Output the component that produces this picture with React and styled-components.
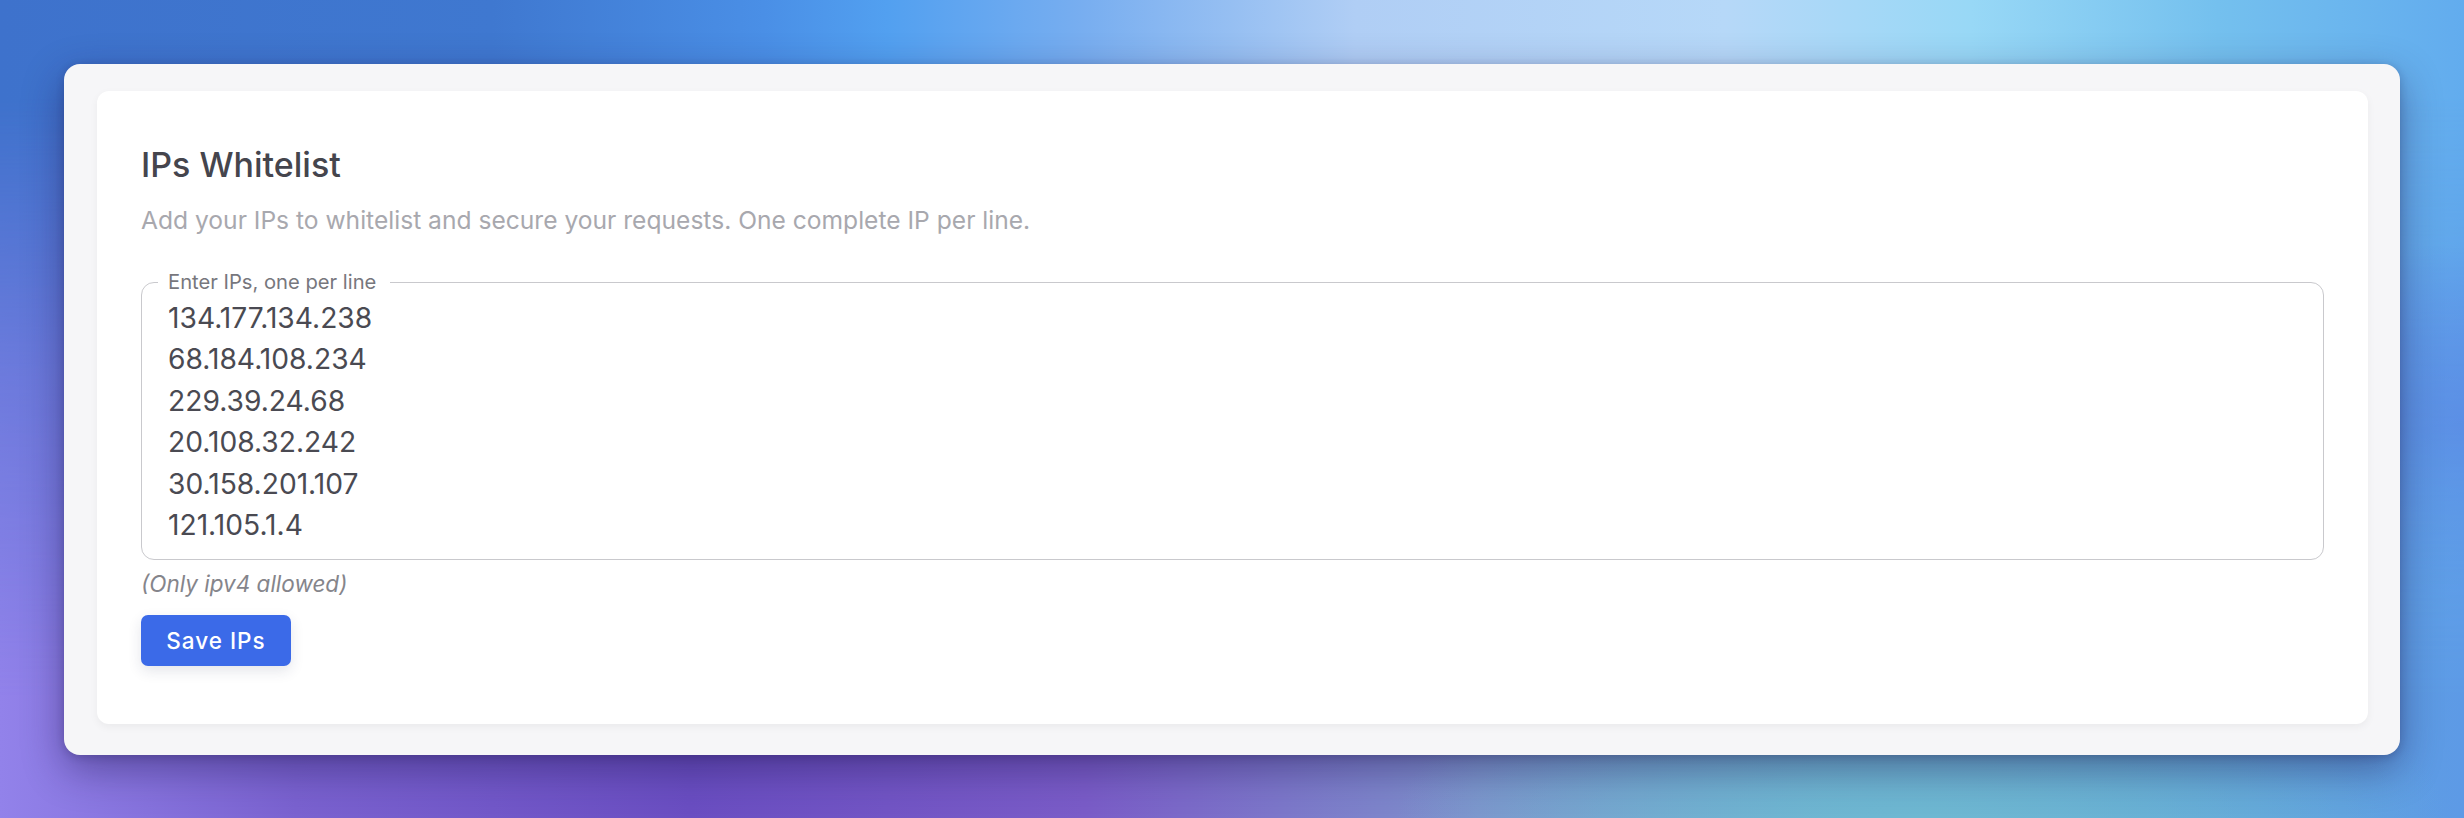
import React from "react";
import styled, { createGlobalStyle } from "styled-components";

const GlobalStyle = createGlobalStyle`
  html, body { margin: 0; padding: 0; }
  body { font-family: Inter, "Noto Sans", "Liberation Sans", sans-serif; }
  * { box-sizing: border-box; }
`;

const Page = styled.div`
  position: relative;
  width: 2464px;
  min-height: 818px;
  padding: 64px;
  overflow: hidden;
  background:
    radial-gradient(ellipse 420px 260px at 100% 52%, rgba(88, 120, 228, 0.9), rgba(88, 120, 228, 0) 70%),
    linear-gradient(90deg, #3e72cc 0%, #3f78d0 20%, #4a8fe6 31%, #52a0f0 36%, #78aef0 44%, #96bff2 50%, #b0cef5 55%, #b6d8f8 70%, #98d8f6 80%, #74c0ee 90%, #62acee 100%);
  &::before {
    content: "";
    position: absolute;
    inset: 0;
    background:
      radial-gradient(ellipse 700px 260px at 78% 100%, rgba(110, 184, 210, 1), rgba(110, 184, 210, 0) 75%),
      linear-gradient(90deg, #9282ea 0%, #7a62d0 12%, #6a4ec2 28%, #7a5cc8 44%, #7e92cc 60%, #70aed0 74%, #62a8d8 86%, #5d9ae6 100%);
    -webkit-mask-image: linear-gradient(to bottom, rgba(0,0,0,0) 12%, rgba(0,0,0,0.55) 45%, rgba(0,0,0,1) 85%);
    mask-image: linear-gradient(to bottom, rgba(0,0,0,0) 12%, rgba(0,0,0,0.55) 45%, rgba(0,0,0,1) 85%);
  }
`;

const Frame = styled.div`
  position: relative;
  z-index: 1;
  background: #f6f6f8;
  border-radius: 16px;
  padding: 27px 32px 31px 33px;
  box-shadow: 0 14px 40px rgba(30, 22, 80, 0.45), 0 2px 8px rgba(20, 20, 60, 0.2);
`;

const Card = styled.section`
  background: #ffffff;
  border-radius: 12px;
  padding: 53px 44px 58px 44px;
  box-shadow: 0 3px 8px rgba(0, 0, 0, 0.05);
  display: flex;
  flex-direction: column;
  align-items: flex-start;
`;

const Title = styled.h2`
  margin: 0;
  font-size: 34px;
  line-height: 41px;
  font-weight: 500;
  color: #45454d;
`;

const Subtitle = styled.p`
  margin: 20px 0 0;
  font-size: 24.6px;
  line-height: 30px;
  font-weight: 400;
  color: #a8a8ae;
`;

const Field = styled.fieldset`
  align-self: stretch;
  margin: 35px 0 0;
  padding: 0 16px 11px;
  border: 1px solid #c9c9cd;
  border-radius: 13px;
  min-width: 0;
`;

const Legend = styled.legend`
  padding: 0 14px 0 10px;
  font-size: 20.2px;
  line-height: 24px;
  color: #77777d;
`;

const IPArea = styled.textarea`
  display: block;
  width: 100%;
  height: 254px;
  margin: 0;
  padding: 4px 10px 0;
  border: none;
  outline: none;
  resize: none;
  background: transparent;
  font-family: Inter, "Noto Sans", "Liberation Sans", sans-serif;
  font-size: 28.2px;
  line-height: 41.4px;
  color: #4a4a52;
  overflow: hidden;
`;

const Hint = styled.div`
  margin-top: 10px;
  font-size: 22.5px;
  line-height: 27px;
  font-style: italic;
  color: #85858b;
`;

const SaveButton = styled.button`
  margin-top: 18px;
  height: 51px;
  width: 150px;
  padding: 0;
  border: none;
  border-radius: 7px;
  background: #3b6ae8;
  color: #ffffff;
  font-family: Inter, "Noto Sans", "Liberation Sans", sans-serif;
  font-size: 22.5px;
  font-weight: 500;
  letter-spacing: 1px;
  box-shadow: 0 5px 14px rgba(30, 40, 80, 0.12);
  cursor: pointer;
`;

const IPS = [
  "134.177.134.238",
  "68.184.108.234",
  "229.39.24.68",
  "20.108.32.242",
  "30.158.201.107",
  "121.105.1.4",
].join("\n");

export default function App() {
  return (
    <>
      <GlobalStyle />
      <Page>
        <Frame>
          <Card>
            <Title>IPs Whitelist</Title>
            <Subtitle>
              Add your IPs to whitelist and secure your requests. One complete IP per line.
            </Subtitle>
            <Field>
              <Legend>Enter IPs, one per line</Legend>
              <IPArea defaultValue={IPS} spellCheck={false} />
            </Field>
            <Hint>(Only ipv4 allowed)</Hint>
            <SaveButton>Save IPs</SaveButton>
          </Card>
        </Frame>
      </Page>
    </>
  );
}
